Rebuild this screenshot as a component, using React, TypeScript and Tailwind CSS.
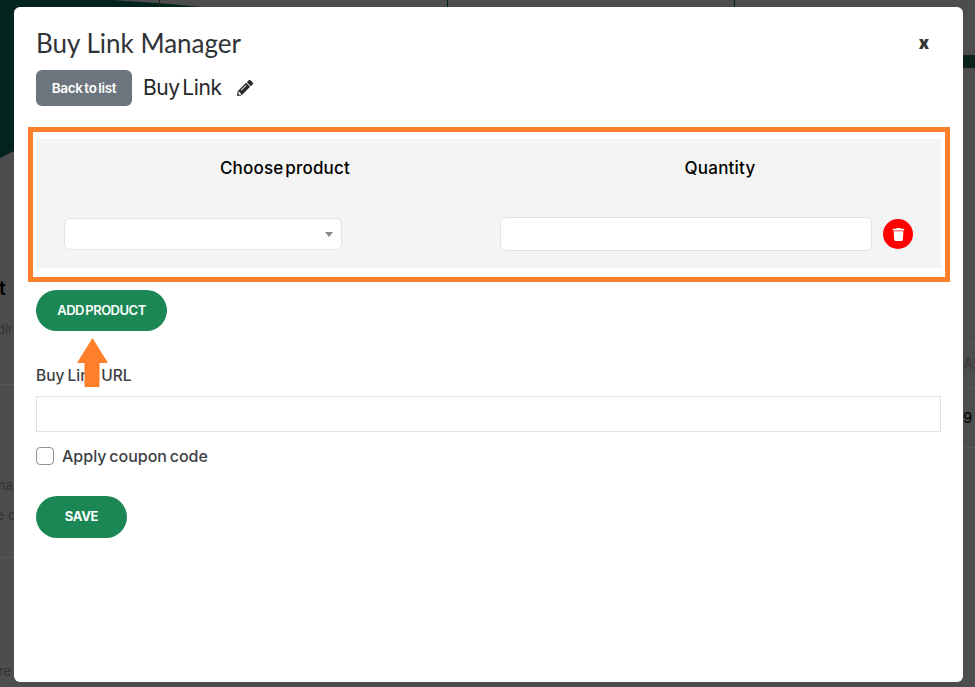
import { FaPencilAlt, FaTrash } from 'react-icons/fa';

const body = { fontFamily: '"Inter", "Liberation Sans", sans-serif' };

function PageBehind() {
  return (
    <div className="absolute inset-0 overflow-hidden bg-[#4d4d4d]" style={body}>
      <svg className="absolute left-0 top-0" width="230" height="160" viewBox="0 0 230 160">
        <path d="M0 0 H112 L170 4 L222 9 H14 V151 L0 158 Z" fill="#03241e" />
        <rect x="14" y="7" width="216" height="3" fill="#03241e" />
      </svg>
      <div className="absolute left-[159px] top-0 h-[7px] w-px bg-[#222]" />
      <div className="absolute left-[447px] top-0 h-[7px] w-px bg-[#03241e]" />
      <div className="absolute left-[734px] top-0 h-[7px] w-px bg-[#03241e]" />
      <div className="absolute right-0 top-[55px] h-[13px] w-[12px] bg-[#0a211c]" />
      <div className="absolute left-0 top-[384px] h-px w-[14px] bg-[#575757]" />
      <div className="absolute left-0 top-[557px] h-px w-[14px] bg-[#575757]" />
      <div className="absolute right-0 top-[342px] h-px w-[12px] bg-[#575757]" />
      <div className="absolute right-0 top-[387px] h-px w-[12px] bg-[#575757]" />
      <div className="absolute right-0 top-[447px] h-px w-[12px] bg-[#575757]" />
      <span className="absolute left-[-1px] top-[277px] text-[19px] font-semibold leading-6 text-black">t</span>
      <span className="absolute left-[-3px] top-[321px] text-[13px] leading-4 text-[#333]">dir</span>
      <span className="absolute left-[-6px] top-[477px] text-[13px] leading-4 text-[#333]">ma</span>
      <span className="absolute left-[-4px] top-[507px] text-[14px] leading-4 text-[#333]">e c</span>
      <span className="absolute left-[-10px] top-[663px] text-[14px] leading-4 text-[#333]">ure</span>
      <span className="absolute left-[963px] top-[356px] text-[14px] font-semibold leading-4 text-[#3a3a3a]">AS</span>
      <span className="absolute left-[963px] top-[408px] whitespace-nowrap text-[15px] leading-5 text-black">9 A</span>
    </div>
  );
}

export default function App() {
  return (
    <div className="relative h-[687px] w-[975px] overflow-hidden">
      <PageBehind />
      <div className="absolute left-[14px] top-[7px] h-[675px] w-[949px] rounded-md bg-white px-[22px] text-[#373a3c]" style={body}>
        <div className="flex items-start justify-between pt-[20px]">
          <h1 className="text-[26px] leading-[32px] text-[#2f3336]" style={{ fontFamily: 'Lato, sans-serif' }}>Buy Link Manager</h1>
          <span className="mr-[12px] mt-[4px] text-[17px] font-black leading-[24px] text-[#333]">x</span>
        </div>
        <div className="mt-[11px] flex items-center">
          <button className="h-[36px] w-[96px] rounded-md bg-[#6c757d] text-[13.5px] font-semibold tracking-[-0.3px] text-white [word-spacing:-1.5px]">Back to list</button>
          <span className="ml-[11px] text-[21px] tracking-[-0.4px] text-[#25282b] [word-spacing:-3px]">Buy Link</span>
          <FaPencilAlt size={16} className="ml-[15px] text-[#25282b]" />
        </div>
        <div className="-ml-[8px] mt-[21px] w-[922px] border-[5px] border-[#ff7f2a] pb-[9px] pl-[3px] pr-[4px] pt-[7px]">
          <div className="h-[129px] bg-[#f4f4f4] pt-[19px] text-black">
            <div className="grid grid-cols-[498px_372px] text-center text-[17px] font-medium leading-[20px] tracking-[0.2px] [word-spacing:-3px]">
              <div>Choose product</div>
              <div>Quantity</div>
            </div>
            <div className="mt-[39px] flex items-center pl-[28px]">
              <div className="flex h-[32px] w-[278px] items-center justify-end rounded-md border border-[#e2e2e2] bg-white pr-[8px]">
                <span className="h-0 w-0 border-x-[4px] border-t-[5px] border-x-transparent border-t-[#888]" />
              </div>
              <div className="ml-[158px] h-[34px] w-[372px] rounded-md border border-[#e2e2e2] bg-white" />
              <div className="ml-[11px] flex h-[30px] w-[30px] items-center justify-center rounded-full bg-[#ff0000]">
                <FaTrash size={13} className="text-white" />
              </div>
            </div>
          </div>
        </div>
        <button className="mt-[8px] block h-[41px] w-[131px] rounded-full bg-[#1a8754] text-[13px] font-semibold tracking-[-0.5px] text-white [word-spacing:-1.5px]">ADD PRODUCT</button>
        <label className="mt-[35px] block text-[15.5px] font-medium leading-[20px] text-[#3c3f45] [word-spacing:-1px]">Buy Link URL</label>
        <div className="mt-[10px] h-[36px] w-[905px] border border-[#e2e2e2] bg-white" />
        <div className="mt-[14px] flex items-center">
          <span className="h-[18px] w-[18px] rounded-[4px] border border-[#8f8f9d] bg-white" />
          <span className="ml-[8px] text-base font-medium leading-[20px] text-[#3c3f45] [word-spacing:-1.5px]">Apply coupon code</span>
        </div>
        <button className="mt-[30px] block h-[42px] w-[91px] rounded-full bg-[#1a8754] text-[13px] font-bold tracking-[-0.3px] text-white">SAVE</button>
      </div>
      {/* annotation arrow over the label */}
      <svg className="absolute left-[77px] top-[338px]" width="31" height="49" viewBox="0 0 31 49">
        <path d="M15.5 0 L31 25 H22.5 V49 H7.5 V25 H0 Z" fill="#ff7f2a" />
      </svg>
    </div>
  );
}
